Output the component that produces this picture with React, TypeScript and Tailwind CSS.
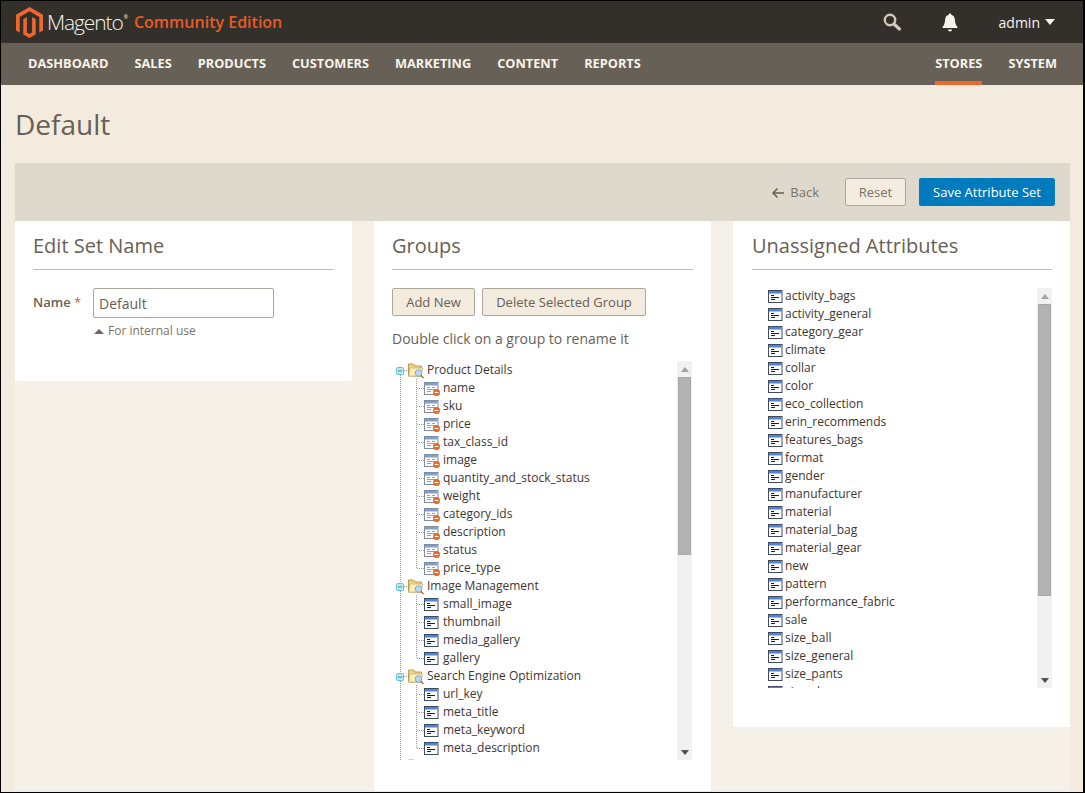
import React from 'react';

const navLeft = ['DASHBOARD', 'SALES', 'PRODUCTS', 'CUSTOMERS', 'MARKETING', 'CONTENT', 'REPORTS'];

const groups = [
  {
    name: 'Product Details',
    locked: true,
    items: ['name', 'sku', 'price', 'tax_class_id', 'image', 'quantity_and_stock_status', 'weight', 'category_ids', 'description', 'status', 'price_type'],
  },
  { name: 'Image Management', locked: false, items: ['small_image', 'thumbnail', 'media_gallery', 'gallery'] },
  { name: 'Search Engine Optimization', locked: false, items: ['url_key', 'meta_title', 'meta_keyword', 'meta_description'] },
  { name: 'Advanced Pricing', locked: false, items: [] as string[] },
];

const unassigned = [
  'activity_bags', 'activity_general', 'category_gear', 'climate', 'collar', 'color', 'eco_collection',
  'erin_recommends', 'features_bags', 'format', 'gender', 'manufacturer', 'material', 'material_bag',
  'material_gear', 'new', 'pattern', 'performance_fabric', 'sale', 'size_ball', 'size_general', 'size_pants', 'size_shoes',
];

function Logo() {
  return (
    <svg width="27" height="31" viewBox="0 0 27 31" className="shrink-0">
      <path fill="#ef672f" d="M13.5 0 27 7.8v15.6l-3.700 2.200V10l-9.800-5.700L3.700 10v15.600L0 23.400V7.800z" />
      <path fill="#ef672f" d="m13.500 31-6.200-3.600V12.200l3.600-2.100v15.300l2.600 1.600 2.600-1.600V10.100l3.600 2.100v15.200z" />
    </svg>
  );
}

function SearchIcon() {
  return (
    <svg width="18" height="18" viewBox="0 0 18 18" fill="none" stroke="#cfc8bb">
      <circle cx="7" cy="7" r="5.200" strokeWidth="2.400" />
      <path d="m11 11 5.400 5" strokeWidth="3.200" strokeLinecap="round" />
    </svg>
  );
}

function BellIcon() {
  return (
    <svg width="16" height="19" viewBox="0 0 16 19" fill="#f7f3eb">
      <path d="M8 0.500c.8 0 1.300.5 1.300 1.300 2.300.6 3.500 2.500 3.600 5 .1 3 .8 5.200 2.600 7.200v1H.5v-1c1.800-2 2.500-4.200 2.600-7.200.1-2.500 1.300-4.400 3.600-5C6.700 1 7.200.5 8 .5z" />
      <path d="M6 16.500h4c0 1.200-.9 2-2 2s-2-.8-2-2z" />
    </svg>
  );
}

// attribute icon: blue title bar, text lines, optional orange "no delete" badge
function AttrIcon({ locked }: { locked?: boolean }) {
  return (
    <svg width="17" height="18" viewBox="0 0 17 18" className="shrink-0">
      <rect x="0.500" y="3.500" width="13.500" height="12" fill="#fff" stroke={locked ? '#7d8ba3' : '#3d4a60'} />
      <rect x="1" y="4" width="12.500" height="2.500" fill={locked ? '#7f9fce' : '#4f83d6'} />
      <path d="M3 8.500h3M3 10.500h8M3 12.500h4" stroke={locked ? '#9aa0a8' : '#1c1c1c'} fill="none" />
      {locked && (
        <>
          <path d="M8 8.500h3" stroke="#9aa0a8" fill="none" />
          <circle cx="12.500" cy="13.500" r="3.500" fill="#e8661c" />
          <path d="M10.500 13.500h4" stroke="#fff" strokeWidth="1.200" />
        </>
      )}
    </svg>
  );
}

function FolderIcon() {
  return (
    <svg width="17" height="18" viewBox="0 0 17 18" className="shrink-0">
      <path d="M.5 3V15H13.500V5H7L5.500 3z" fill="#efd486" stroke="#b79a55" />
      <path d="M2 7h12.500l-1.500 8H.8z" fill="#fbeeb8" stroke="#c9ad68" strokeWidth="0.700" />
      <circle cx="10.500" cy="12" r="3.300" fill="#bcd6ee" stroke="#8aa6c2" />
      <path d="m13 14.500 2.500 2.500" stroke="#b5672c" strokeWidth="1.400" />
    </svg>
  );
}

function GroupConnector({ first }: { first: boolean }) {
  return (
    <svg width="16" height="18" viewBox="0 0 16 18" className="shrink-0">
      <path d={first ? 'M8.500 14V18' : 'M8.500 0V18'} stroke="#a0a0a0" strokeDasharray="1 1" fill="none" />
      <path d="M12 9.500h4" stroke="#a0a0a0" strokeDasharray="1 1" fill="none" />
      <rect x="4.500" y="6.500" width="7" height="7" rx="1" fill="#bfe6ee" stroke="#5fc3d6" />
      <path d="M6 10h4" stroke="#4a8fa0" />
    </svg>
  );
}

function LeafConnector({ last }: { last: boolean }) {
  return (
    <svg width="32" height="18" viewBox="0 0 32 18" className="shrink-0">
      <path d="M8.500 0V18" stroke="#a0a0a0" strokeDasharray="1 1" fill="none" />
      <path d={last ? 'M24.500 0V10' : 'M24.500 0V18'} stroke="#a0a0a0" strokeDasharray="1 1" fill="none" />
      <path d="M25 9.500h7" stroke="#a0a0a0" strokeDasharray="1 1" fill="none" />
    </svg>
  );
}

function Scrollbar({ thumb }: { thumb: number }) {
  return (
    <div className="flex w-[15px] shrink-0 flex-col items-center bg-[#f1f1f1]">
      <div className="flex h-4 items-center justify-center">
        <div className="h-0 w-0 border-x-[4px] border-b-[5px] border-x-transparent border-b-[#a3a3a3]" />
      </div>
      <div className="w-[13px] border border-[#a8a8a8] bg-[#b3b3b3]" style={{ height: thumb }} />
      <div className="flex-1" />
      <div className="flex h-4 items-center justify-center">
        <div className="h-0 w-0 border-x-[4px] border-t-[5px] border-x-transparent border-t-[#505050]" />
      </div>
    </div>
  );
}

function PanelTitle({ children }: { children: React.ReactNode }) {
  return (
    <h2 className="flex h-[49px] items-center border-b border-[#c4bdb2] pt-[2px] text-[20px] leading-none text-[#676056]">{children}</h2>
  );
}

export default function App() {
  return (
    <div className="h-[793px] w-[1085px] overflow-hidden border-y border-l border-r-2 border-black bg-[#f2ebde] font-['Open_Sans',sans-serif]">
      <header className="flex h-[42px] items-center bg-[#33302b] pl-[15px] pr-[28px]">
        <Logo />
        <span className="ml-[4px] text-[21px] font-light leading-none tracking-[-1.100px] text-[#f7f3eb]">Magento</span>
        <span className="mb-2 ml-[1px] text-[5px] text-[#f7f3eb]">®</span>
        <span className="ml-[6px] text-[16px] font-semibold leading-none text-[#eb5a20]">Community Edition</span>
        <div className="ml-auto flex items-center">
          <SearchIcon />
          <div className="ml-[41px]">
            <BellIcon />
          </div>
          <span className="ml-[41px] text-[14px] text-[#f7f3eb]">admin</span>
          <div className="ml-[5px] h-0 w-0 border-x-[5px] border-t-[6px] border-x-transparent border-t-[#f7f3eb]" />
        </div>
      </header>

      <nav className="flex h-[42px] items-stretch bg-[#676056] pl-[27px] pr-[26px] text-[12.770px] font-bold text-[#f7f3eb]">
        <div className="flex gap-[26px]">
          {navLeft.map((item) => (
            <span key={item} className="flex items-center">{item}</span>
          ))}
        </div>
        <div className="ml-auto flex gap-[26px]">
          <span className="flex items-center border-b-[4px] border-[#ef672f] pt-1">STORES</span>
          <span className="flex items-center">SYSTEM</span>
        </div>
      </nav>

      <div className="flex h-[78px] items-center pl-[14px]">
        <h1 className="text-[28px] leading-none text-[#676056]">Default</h1>
      </div>

      <div className="ml-[14px] mr-[13px] h-[628px] bg-[#f5f0e8]">
        <div className="flex h-[58px] items-center justify-end bg-[#dfd8cd] pr-[15px] text-[13px]">
          <div className="flex items-center text-[#7b7468]">
            <svg width="14" height="12" viewBox="0 0 14 12" fill="none" stroke="#676056" strokeWidth="1.500" className="mt-[2px]">
              <path d="M13 6H2M6.500 1.500 2 6l4.500 4.500" />
            </svg>
            <span className="ml-[5px] pt-[2px]">Back</span>
          </div>
          <button className="ml-[26px] h-[28px] w-[61px] rounded-[2px] border border-[#ada89e] bg-[#f2ebde] pt-[2px] text-[#7b7468]">Reset</button>
          <button className="ml-[13px] h-[28px] w-[136px] rounded-[2px] bg-[#007bbd] pt-[2px] text-white">Save Attribute Set</button>
        </div>

        <div className="flex items-start gap-[22px]">
          <section className="h-[160px] w-[337px] bg-white px-[18px]">
            <PanelTitle>Edit Set Name</PanelTitle>
            <div className="mt-[18px] flex">
              <label className="mt-[5px] w-[60px] text-[13px] font-semibold text-[#676056]">
                Name <span className="font-normal text-[#e0561c]">*</span>
              </label>
              <div>
                <input readOnly value="Default" className="h-[30px] w-[181px] rounded-[2px] border border-[#a8a59d] px-[5px] text-[14px] text-[#676056] outline-none" />
                <div className="mt-[4px] flex items-center pl-[1px] text-[12px] text-[#7b7468]">
                  <div className="mr-[4px] h-0 w-0 border-x-[5px] border-b-[5px] border-x-transparent border-b-[#666]" />
                  For internal use
                </div>
              </div>
            </div>
          </section>

          <section className="h-[570px] w-[337px] bg-white px-[18px]">
            <PanelTitle>Groups</PanelTitle>
            <div className="mt-[18px] flex gap-[7px] text-[13px] text-[#676056]">
              <button className="h-[28px] w-[83px] rounded-[2px] border border-[#ada89e] bg-[#f2ebde] pt-[2px]">Add New</button>
              <button className="h-[28px] w-[164px] rounded-[2px] border border-[#ada89e] bg-[#f2ebde] pt-[2px]">Delete Selected Group</button>
            </div>
            <p className="mt-[13px] text-[14px] leading-[19px] text-[#676056]">Double click on a group to rename it</p>
            <div className="mt-[13px] flex h-[399px] w-[300px] overflow-hidden">
              <div className="min-w-0 flex-1 overflow-hidden text-[12px] leading-[18px] text-[#41362f]">
                {groups.map((group, gi) => (
                  <div key={group.name}>
                    <div className="flex h-[18px] items-center">
                      <GroupConnector first={gi === 0} />
                      <FolderIcon />
                      <span className="ml-[2px]">{group.name}</span>
                    </div>
                    {group.items.map((item, i) => (
                      <div key={item} className="flex h-[18px] items-center">
                        <LeafConnector last={i === group.items.length - 1} />
                        <AttrIcon locked={group.locked} />
                        <span className="ml-[2px]">{item}</span>
                      </div>
                    ))}
                  </div>
                ))}
              </div>
              <Scrollbar thumb={178} />
            </div>
          </section>

          <section className="h-[506px] w-[337px] bg-white pl-[19px] pr-[18px]">
            <PanelTitle>Unassigned Attributes</PanelTitle>
            <div className="mt-[18px] flex h-[400px] w-[300px] overflow-hidden">
              <div className="-mt-px min-w-0 flex-1 overflow-hidden pl-[16px] text-[12px] leading-[18px] text-[#41362f]">
                {unassigned.map((item) => (
                  <div key={item} className="flex h-[18px] items-center">
                    <AttrIcon />
                    <span>{item}</span>
                  </div>
                ))}
              </div>
              <Scrollbar thumb={292} />
            </div>
          </section>
        </div>
      </div>
    </div>
  );
}
